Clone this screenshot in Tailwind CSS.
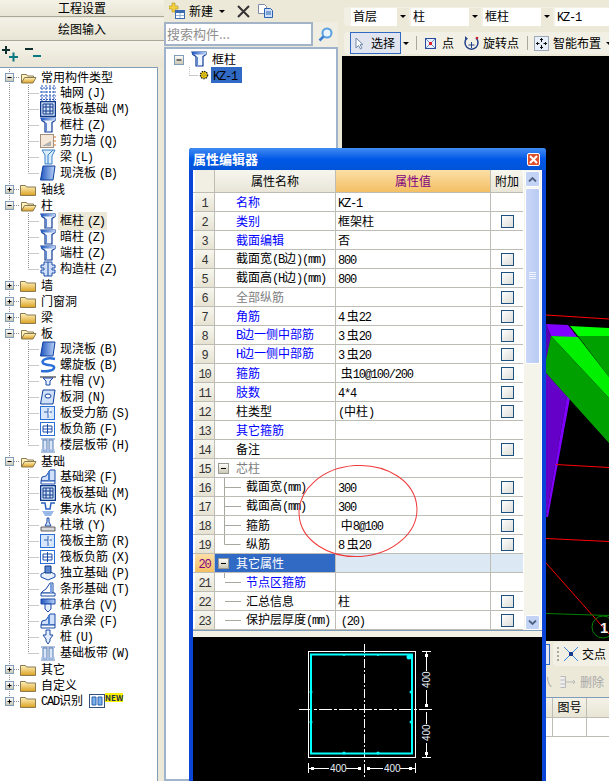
<!DOCTYPE html>
<html lang="zh-CN">

<head>
  <meta charset="UTF-8" />
  <title>属性编辑器</title>
  <script src="https://cdn.jsdelivr.net/npm/@tailwindcss/browser@4"></script>
</head>

<body class="relative flex w-[609px] h-[781px] overflow-hidden bg-[#ece9d8] text-xs leading-4 text-black font-['Noto_Sans_CJK_SC',sans-serif]">
  <svg class="absolute w-0 h-0">
    <defs>
      <linearGradient id="fold" x1="0" y1="0" x2="0" y2="1">
        <stop offset="0" stop-color="#fff3c0" />
        <stop offset="1" stop-color="#dca020" />
      </linearGradient>
      <linearGradient id="box" x1="0" y1="0" x2="0" y2="1">
        <stop offset="0" stop-color="#ffffff" />
        <stop offset="1" stop-color="#c8c4b0" />
      </linearGradient>
      <linearGradient id="blu" x1="0" y1="0" x2="1" y2="0">
        <stop offset="0" stop-color="#1f55c0" />
        <stop offset="1" stop-color="#bcd4f6" />
      </linearGradient>
    </defs>
  </svg>

  <!-- left column -->
  <div class="flex flex-col w-[164px] h-full shrink-0">
    <div class="h-[17px] text-center leading-[16px] bg-linear-to-b from-[#f4f2e6] to-[#e8e5d5] border-b border-[#aca899]">工程设置</div>
    <div class="h-[23px] mt-px text-center leading-[22px] bg-linear-to-b from-[#f4f2e6] to-[#e8e5d5] border-b border-[#aca899]">绘图输入</div>
    <div class="h-[26px] flex items-center pl-[1px] bg-linear-to-b from-[#f5f3ea] to-[#e8e5d5]">
      <svg class="w-[42px] h-[18px]" viewBox="0 0 42 18" fill="none" stroke-width="2">
        <path d="M1 5h8M5 1v8" stroke="#103030" />
        <path d="M8 12h9M12.500 7.500v9" stroke="#0a7a80" />
        <path d="M24 4h8" stroke="#103030" />
        <path d="M32 11h8" stroke="#0a7a80" />
      </svg>
    </div>
    <div id="tree" class="flex-1 w-[158px] pt-px bg-white border-r border-t border-[#7f9db9] overflow-hidden"></div>
  </div>

  <!-- component list -->
  <div class="flex flex-col w-[176px] h-full shrink-0">
    <div class="h-[22px] flex items-center pl-[5px]">
      <svg class="w-[17px] h-[18px]" viewBox="0 0 17 18">
        <path d="M3 1h3v3h3v3H6v3H3V7H0V4h3z" fill="#f4d040" stroke="#b09020" stroke-width=".6" />
        <rect x="6.500" y="8.500" width="9" height="8" fill="#fff" stroke="#3a6ab0" />
        <path d="M6.500 8.500h9v2.500h-9z" fill="#3a6ab0" />
        <path d="M7 13.500h8M11 11v5" stroke="#9ab4d8" />
      </svg>
      <span class="ml-[3px] text-[12px]">新建</span>
      <span class="ml-[6px] w-0 h-0 border-x-[3px] border-t-[3px] border-x-transparent border-t-black"></span>
      <svg class="ml-[12px] w-[13px] h-[13px]" viewBox="0 0 13 13">
        <path d="M1 1l11 11M12 1L1 12" stroke="#333" stroke-width="2" />
      </svg>
      <svg class="ml-[8px] w-[15px] h-[14px]" viewBox="0 0 15 14">
        <path d="M.5.5h6l2 2v7h-8z" fill="#fff" stroke="#7a8aa8" />
        <path d="M6.500 4.500h6l2 2v7h-8z" fill="#cfe0fa" stroke="#2a60b0" />
        <path d="M8 8h5M8 10h5" stroke="#2a60b0" />
      </svg>
    </div>
    <div class="h-[25px] flex">
      <div class="w-[149px] h-[24px] bg-white border-2 border-[#a4b4c8] pl-[1px] text-[13px] leading-[20px] text-[#909090]">搜索构件...</div>
      <div class="w-[25px] flex items-center justify-center bg-[#f0eee2]">
        <svg class="w-[15px] h-[15px]" viewBox="0 0 15 15" fill="none">
          <circle cx="9" cy="6" r="4.500" fill="#eaf4fc" stroke="#58a0e0" stroke-width="2" />
          <path d="M5.500 9.500L1.500 13.500" stroke="#3a80d0" stroke-width="2.500" />
        </svg>
      </div>
    </div>
    <div class="flex-1 w-[174px] bg-white border-2 border-[#9fb4cc] pt-px">
      <div class="flex items-center h-[17px]">
        <svg class="w-[25px] h-[16px] shrink-0" viewBox="0 0 25 16">
          <rect x="8.500" y="4.500" width="9" height="9" fill="url(#box)" stroke="#7f9db9" />
          <path d="M10.500 9h5" stroke="#000" />
        </svg>
        <span id="rootIcon"></span>
        <span class="ml-[5px]">框柱</span>
      </div>
      <div class="flex items-center h-[16px] pl-[23px]">
        <svg class="w-[21px] h-[16px] shrink-0" viewBox="0 0 21 16">
          <path d="M0 0v8.500h9" stroke="#909090" stroke-dasharray="1 1" fill="none" />
          <circle cx="15" cy="8" r="3.500" fill="#ffe000" stroke="#202020" stroke-width="1.500" stroke-dasharray="1.500 .8" />
          <circle cx="15" cy="8" r="1.300" fill="#ffff60" stroke="#704000" stroke-width=".6" />
        </svg>
        <span class="ml-[1px] pl-[2px] w-[31px] h-[16px] bg-[#316ac5] text-black"><span class="font-['Liberation_Mono'] text-[12px] tracking-[-1.2px]">KZ-1</span></span>
      </div>
    </div>
  </div>

  <!-- drawing side -->
  <div class="flex flex-col flex-1 min-w-0 h-full">
    <div class="h-[7px]"></div>
    <div class="h-[19px] flex items-center ml-[4px] pl-[7px] gap-[2px] bg-[#f2f0e4] rounded-l-sm">
      <div class="flex w-[58px] h-[18px] bg-white">
        <span class="flex-1 pl-[2px]">首层</span>
        <span class="w-[12px] flex items-center justify-center bg-[#ece9d8]"><span class="w-0 h-0 border-x-[3px] border-t-[3px] border-x-transparent border-t-black"></span></span>
      </div>
      <div class="flex w-[70px] h-[18px] bg-white">
        <span class="flex-1 pl-[2px]">柱</span>
        <span class="w-[12px] flex items-center justify-center bg-[#ece9d8]"><span class="w-0 h-0 border-x-[3px] border-t-[3px] border-x-transparent border-t-black"></span></span>
      </div>
      <div class="flex w-[70px] h-[18px] bg-white">
        <span class="flex-1 pl-[2px]">框柱</span>
        <span class="w-[12px] flex items-center justify-center bg-[#ece9d8]"><span class="w-0 h-0 border-x-[3px] border-t-[3px] border-x-transparent border-t-black"></span></span>
      </div>
      <div class="flex-1 h-[18px] bg-white pl-[2px]"><span class="font-['Liberation_Mono'] text-[12px] tracking-[-1.2px]">KZ-1</span></div>
    </div>
    <div class="h-[6px]"></div>
    <div class="h-[22px] flex items-center ml-[4px] pl-[6px] bg-[#f2f0e4] rounded-l-sm overflow-hidden whitespace-nowrap">
      <div class="w-[51px] h-[22px] shrink-0 flex items-center border border-[#316ac5] bg-[#e0e5f0] pl-[4px]">
        <svg class="w-[10px] h-[13px]" viewBox="0 0 10 13">
          <path d="M1 1v10l2.500-2.500 2 3.500 1.500-1-2-3.300H8z" fill="#fff" stroke="#7088a8" />
        </svg>
        <span class="ml-[6px]">选择</span>
      </div>
      <span class="ml-[2px] shrink-0 w-0 h-0 border-x-[3px] border-t-[3px] border-x-transparent border-t-black"></span>
      <span class="ml-[7px] shrink-0 w-px h-[14px] bg-[#aca899]"></span>
      <svg class="ml-[8px] shrink-0 w-[11px] h-[11px]" viewBox="0 0 11 11">
        <rect x=".5" y=".5" width="10" height="10" fill="#e8f0fc" stroke="#2a4aa0" />
        <path d="M1 1l9 9M10 1l-9 9" stroke="#7090c8" />
        <rect x="4" y="4" width="3" height="3" fill="#e02030" />
      </svg>
      <span class="ml-[6px] shrink-0">点</span>
      <svg class="ml-[10px] shrink-0 w-[15px] h-[16px]" viewBox="0 0 15 16" fill="none">
        <path d="M3 3a6.500 6.500 0 1 0 9 0" stroke="#24428a" stroke-width="1.500" />
        <path d="M7.500 7v6M4.500 10h6" stroke="#24428a" />
        <circle cx="13" cy="3" r="1.300" fill="#d02030" />
        <path d="M1 1l3 3-3 1z" fill="#24428a" />
      </svg>
      <span class="ml-[4px] shrink-0">旋转点</span>
      <span class="ml-[8px] shrink-0 w-px h-[14px] bg-[#aca899]"></span>
      <svg class="ml-[6px] shrink-0 w-[15px] h-[15px]" viewBox="0 0 15 15" fill="none">
        <rect x=".5" y=".5" width="14" height="14" fill="#e8f0fc" stroke="#506080" stroke-dasharray="1 1" />
        <path d="M7.500 2v4M6 3.500h3M7.500 9v4M6 11.500h3M2 7.500h3.500M9.500 7.500H13M3.500 6v3M11.500 6v3" stroke="#101010" />
      </svg>
      <span class="ml-[4px] shrink-0">智能布置</span>
      <span class="ml-[5px] shrink-0 w-0 h-0 border-x-[3px] border-t-[3px] border-x-transparent border-t-black"></span>
    </div>
    <div class="h-[2px]"></div>

    <svg class="ml-[2px] w-[267px] h-[585px] bg-black shrink-0" viewBox="342 56 267 585">
      <path d="M546 324L568 325L578 338L551 336z" fill="#8000ff" />
      <path d="M546 324L551 336L546 372z" fill="#5a00b4" />
      <path d="M546 373L567 396L546 517z" fill="#6400c8" />
      <path d="M567 396L570 398L548 517H546z" fill="#8000ff" />
      <path d="M570 326L609 328V336H578z" fill="#00ff00" />
      <path d="M578 336H609V377z" fill="#00a000" />
      <path d="M551 336L578 337L609 377V398z" fill="#00f000" />
      <path d="M551 336L609 398V443L546 373V360z" fill="#00a000" />
      <path d="M546 315L609 319" stroke="#ff0000" fill="none" />
      <path d="M556 464.500L609 467.500M546 538.500L609 541.500M546 563L609 634" stroke="#ff0000" fill="none" />
      <path d="M546 613.500L609 615.500" stroke="#008000" fill="none" />
      <circle cx="603" cy="627" r="11" stroke="#008000" fill="none" />
      <text x="600" y="633" font-family="Liberation Sans" font-size="15" font-weight="700" fill="#f0f0f0">1</text>
    </svg>

    <div class="h-[26px] flex items-center pl-[206px] overflow-hidden">
      <div class="w-[4px] h-[21px] shrink-0 bg-[#e0e5f0] border-y border-r border-[#316ac5]"></div>
      <div class="ml-[3px] w-[63px] h-[24px] shrink-0 flex items-center pl-[4px] bg-[#f2f0e4] rounded-l-sm">
        <span class="w-[2px] h-[14px] shrink-0 border-l-2 border-dotted border-[#aca899]"></span>
        <svg class="ml-[5px] w-[14px] h-[14px] shrink-0" viewBox="0 0 14 14">
          <path d="M0 0l14 14M14 0L0 14" stroke="#3a8ae0" />
          <rect x="5" y="5" width="4" height="4" fill="#1a3a90" />
        </svg>
        <span class="ml-[4px] whitespace-nowrap">交点</span>
      </div>
    </div>
    <div class="h-[30px] flex items-center pl-[206px] overflow-hidden text-[#a8a8a8]">
      <span class="w-[6px] shrink-0 overflow-hidden"><span class="block w-[12px] -ml-[6px]">八</span></span>
      <svg class="ml-[8px] w-[16px] h-[12px] shrink-0" viewBox="0 0 16 12">
        <path d="M.5.5h5v11h-5M.5 4h5M.5 8h5" fill="#eee" stroke="#b8b8b8" />
        <path d="M6 6h9M13 4l2 2-2 2" stroke="#b8b8b8" fill="none" />
      </svg>
      <span class="ml-[4px] whitespace-nowrap">删除</span>
    </div>
    <div class="flex-1 bg-white border-t border-[#7f9db9] pl-[206px] overflow-hidden">
      <div class="flex h-[20px] bg-linear-to-b from-[#f4f2e8] to-[#e8e5d5] border-b border-[#bdbdb5]">
        <span class="w-[7px] shrink-0 border-r border-[#bdbdb5]"></span>
        <span class="w-[34px] shrink-0 text-center border-r border-[#bdbdb5] leading-[18px]">图号</span>
      </div>
      <div class="flex h-[19px] border-b border-[#bdbdb5]">
        <span class="w-[7px] shrink-0 border-r border-[#bdbdb5]"></span>
        <span class="w-[34px] shrink-0 border-r border-[#bdbdb5]"></span>
      </div>
    </div>
  </div>

  <!-- floating property window -->
  <div class="absolute left-[189px] top-[148px] w-[357px] h-[633px] flex flex-col bg-[#0a45d8] rounded-t-[3px]">
    <div class="h-[22px] shrink-0 flex items-center justify-between pl-[4px] pr-[6px] bg-linear-to-b from-[#3f8cf3] via-[#0058e6] to-[#0054d8] rounded-t-[3px]">
      <span class="text-white font-bold text-[13px]">属性编辑器</span>
      <span class="w-[13px] h-[13px] flex items-center justify-center bg-[#e0502c] border border-white rounded-[2px]">
        <svg class="w-[9px] h-[9px]" viewBox="0 0 9 9"><path d="M1 1l7 7M8 1L1 8" stroke="#fff" stroke-width="2" /></svg>
      </span>
    </div>
    <div class="flex-1 flex flex-col mx-[4px] mb-0 min-h-0 bg-[#f3f1e6] relative">
      <div class="flex h-[461px] shrink-0 bg-white border-b border-[#7f9db9]">
        <div class="w-[330px] shrink-0">
          <div class="flex h-[23px] pl-[2px] border-b border-[#bdbdb5]">
            <span class="w-[20px] bg-[#f1efe3] border-r border-[#bdbdb5]"></span>
            <span class="w-[121px] text-center leading-[22px] bg-linear-to-b from-[#f7f6ee] to-[#e9e6d8] border-r border-[#bdbdb5]">属性名称</span>
            <span class="w-[155px] text-center leading-[22px] text-[#800080] bg-linear-to-b from-[#fbdfa6] to-[#f4bf63] border-r border-[#bdbdb5]">属性值</span>
            <span class="w-[32px] text-center leading-[22px] bg-linear-to-b from-[#f7f6ee] to-[#e9e6d8]">附加</span>
          </div>
          <div id="rows"></div>
        </div>
        <div class="w-[17px] ml-px flex flex-col shrink-0 bg-[#f5f4ea] px-px pt-[1px]">
          <div class="h-[16px] flex items-center justify-center rounded-[2px] bg-[#c3d3f6] border border-white">
            <svg class="w-[9px] h-[5px]" viewBox="0 0 9 5"><path d="M1 4.500l3.500-3.500L8 4.500" stroke="#4d6185" stroke-width="1.800" fill="none" /></svg>
          </div>
          <div class="h-[176px] mt-px flex items-center justify-center rounded-[2px] bg-linear-to-r from-[#c9d7f8] to-[#b9cbf3] border border-white">
            <svg class="w-[7px] h-[8px]" viewBox="0 0 7 8"><path d="M0 .5h7M0 2.500h7M0 4.500h7M0 6.500h7" stroke="#eef3ff" /></svg>
          </div>
          <div class="flex-1"></div>
          <div class="h-[15px] flex items-center justify-center rounded-[2px] bg-[#c3d3f6] border border-white">
            <svg class="w-[9px] h-[5px]" viewBox="0 0 9 5"><path d="M1 .5L4.500 4 8 .5" stroke="#4d6185" stroke-width="1.800" fill="none" /></svg>
          </div>
        </div>
      </div>
      <div class="h-[6px] shrink-0"></div>
      <svg class="flex-1 w-full bg-black min-h-0" viewBox="193 637 349 144" font-family="Liberation Sans" font-size="10">
        <g fill="none" stroke="#fff">
          <rect x="308.500" y="651.500" width="107" height="106" />
          <path d="M364.500 644V777" stroke-dasharray="9 2 2 2" />
          <path d="M299 709.500H434" stroke-dasharray="13 2 3 2" />
          <path d="M426.500 651V671M426.500 690V705M426.500 712V724M426.500 743V757M422 651.500h9M422 757.500h9" />
          <path d="M308.500 763v10M415.500 763v10M309 768.500h20M346 768.500h12M367 768.500h16M400 768.500h15" />
        </g>
        <g fill="#fff">
          <rect x="425" y="654" width="3" height="3" /><rect x="425" y="704" width="3" height="3" /><rect x="425" y="752" width="3" height="3" />
          <rect x="311" y="767" width="3" height="3" /><rect x="358" y="767" width="3" height="3" /><rect x="367" y="767" width="3" height="3" /><rect x="409" y="767" width="3" height="3" />
        </g>
        <rect x="311" y="654.500" width="101" height="99" fill="none" stroke="#00ffff" stroke-width="2" />
        <g fill="#00ffff">
          <circle cx="409" cy="657" r="2.500" /><circle cx="344" cy="655" r="1" /><circle cx="378" cy="655" r="1" />
          <circle cx="311" cy="692" r="1.500" /><circle cx="311" cy="722" r="1.500" /><circle cx="411" cy="692" r="1.500" /><circle cx="411" cy="722" r="1.500" />
          <circle cx="344" cy="753" r="1.500" /><circle cx="378" cy="753" r="1.500" />
        </g>
        <g fill="#e8eef8">
          <text x="330" y="772">400</text>
          <text x="384" y="772">400</text>
          <text transform="translate(430 688) rotate(-90)">400</text>
          <text transform="translate(430 741) rotate(-90)">400</text>
        </g>
      </svg>
      <svg class="absolute left-[104px] top-[293px] w-[122px] h-[96px]" viewBox="0 0 122 96" fill="none">
        <ellipse cx="61" cy="48" rx="59" ry="45.500" transform="rotate(-4 61 48)" stroke="#f03a3a" />
      </svg>
    </div>
  </div>

  <script>
    // small component icons, 16x16
    const icons = {
      col: '<path d="M1 1h14v2.500l-3 2V15H5V5.500l-3-2z" fill="#f0f5fd" stroke="#0f3a96" stroke-width="1.200"/><path d="M1 1h14v2.500H1z" fill="url(#blu)"/><path d="M6.500 6v8" stroke="#5a88d8"/>',
      grid: '<path d="M2 0v16M6 0v16M10 0v16M14 0v16M0 3h16M0 7h16M0 11h16M0 14.500h16" stroke="#2a5ab8" stroke-dasharray="2 1" fill="none"/>',
      raft: '<rect x=".5" y=".5" width="15" height="15" fill="#cfe0f8" stroke="#103a88" stroke-width="1.500"/><path d="M3 3h10v10H3zM6 3v10M10 3v10M3 6h10M3 10h10" stroke="#103a88" fill="none"/>',
      wall: '<rect x=".5" y="1.500" width="13" height="13" fill="#f6e8d8" stroke="#a09080"/><path d="M2 13l9-5v5z" fill="#b0b0b0"/><path d="M15 3v11" stroke="#d87020" stroke-dasharray="2 2"/>',
      beam: '<path d="M2 1h13l-3 6v8H5V6z" fill="#d8ecfa" stroke="#3a80c8"/><path d="M8 6l5-5M8 6v9" stroke="#3a80c8"/>',
      slab: '<path d="M3 1h12l-2 14H.5z" fill="url(#blu)" stroke="#0f3f9c"/>',
      gz: '<path d="M4 1h8v3h3v3h-3v2h3v3h-3v3H4v-3H1V9h3V7H1V4h3z" fill="#cfe0f8" stroke="#1a4aa8"/><path d="M8 1v14" stroke="#1a4aa8"/>',
      spiral: '<path d="M15 2C7 0 1 3 3 6s10 1 11 4-6 5-13 4" fill="none" stroke="#2a70d8" stroke-width="2.500"/>',
      cap: '<path d="M0 3h16v2H0z" fill="#8a8a8a"/><path d="M3 5h10l-3 3v4H6V8z" fill="#e4eefc" stroke="#1a4aa8"/>',
      hole: '<path d="M3 1h12l-2 14H.5z" fill="#cfe0f8" stroke="#0f3f9c"/><ellipse cx="8" cy="7" rx="3" ry="2" fill="#fff" stroke="#0f3f9c"/>',
      sbar: '<rect x=".5" y="1.500" width="14" height="13" fill="#d8e6fa" stroke="#2a70d8"/><path d="M8 3v10M4 7h8" stroke="#2a60b0"/><path d="M11 4a4 4 0 0 0 0 7" stroke="#fff" fill="none"/>',
      nbar: '<rect x=".5" y="1.500" width="14" height="13" fill="#fff" stroke="#2a70d8"/><path d="M3 5h9v6H3zM7.500 3v10M3 8h9" stroke="#1a4aa8" fill="none"/>',
      band: '<path d="M1 2h14M1 15h14" stroke="#5a80c0"/><path d="M3 3h4v11H3zM9 3h4v11H9z" fill="#d8e6fa" stroke="#5a7ab0"/><path d="M1 12h14v3H1z" fill="#a8c0e8" fill-opacity=".6"/>',
      fbeam: '<path d="M6 7l4-6h5v11H1l1-4z" fill="#cfe0f8" stroke="#1a4aa8"/><path d="M1 12h14v3H1z" fill="#fff" stroke="#1a4aa8"/><path d="M9 2v10" stroke="#4a80d0" stroke-width="2"/>',
      pit: '<path d="M1 2h4l1 6h4l1-6h4" fill="none" stroke="#2a60c0" stroke-width="1.500"/><path d="M2 10h12l-3 5H5z" fill="#9ab8e8"/>',
      pier: '<path d="M7 1h2v4l2 4H5l2-4z" fill="#cfe0f8" stroke="#1a4aa8"/><path d="M1 10h14v4H1z" fill="#d8d8d8" stroke="#606060"/>',
      iso: '<path d="M1 9l7-3 7 3v3l-7 3-7-3z" fill="#e8f0fc" stroke="#1a4aa8"/><path d="M5 1h6v7H5z" fill="#5a88d0" stroke="#123a88"/>',
      strip: '<path d="M6 8l4-6h3v10H1l2-2z" fill="#fff" stroke="#1a4aa8"/><path d="M1 12h14v3H1z" fill="#fff" stroke="#1a4aa8"/><path d="M11 3v9" stroke="#7aa0e0" stroke-width="2"/>',
      ptcap: '<path d="M1 2h14v5H1z" fill="url(#blu)" stroke="#1a4aa8"/><path d="M5 7h6v5l-3 3-3-3z" fill="#e4eefc" stroke="#1a4aa8"/>',
      pile: '<path d="M6 1h4v5h3l-3 4v2l-2 3-2-3v-2L3 6h3z" fill="#e4eefc" stroke="#1a4aa8"/>'
    };
    const icon = (n) => `<svg class="w-4 h-4 shrink-0" viewBox="0 0 16 16">${icons[n]}</svg>`;

    // half width text in the screenshot's font is 6px per char
    const txt = (s) => s.replace(/[\x21-\x7e]+/g, (m) => `<span class="font-['Liberation_Mono'] text-[12px] tracking-[-1.2px]">${m}</span>`);

    const foldOpen = '<path d="M21.500 5.500h5l1 1.500h6v2H25l-3.500 5z" fill="#fff3c0" stroke="#8a7a50"/><path d="M21.500 14l3-5.500H36l-3 5.500z" fill="url(#fold)" stroke="#8a7a50"/>';
    const foldShut = '<path d="M20.500 4.500h5l1 1.500h9v8.500h-15z" fill="url(#fold)" stroke="#8a7a50"/>';

    function groupRow(label, open, last) {
      const v = last ? 'M9.500 0v8' : 'M9.500 0v16';
      return `<div class="flex items-center h-4"><svg class="w-10 h-4 shrink-0" viewBox="0 0 40 16">
        <path d="${v}M14 8.500h6" stroke="#909090" stroke-dasharray="1 1" fill="none"/>
        <rect x="5.500" y="4.500" width="8" height="8" fill="url(#box)" stroke="#7f9db9"/>
        <path d="${open ? 'M7.500 8.500h4' : 'M7.500 8.500h4M9.500 6.500v4'}" stroke="#000"/>
        ${open ? foldOpen : foldShut}</svg><span class="ml-px whitespace-nowrap">${txt(label)}</span>${last ? '<svg class="ml-[6px] w-[16px] h-[14px] shrink-0" viewBox="0 0 16 14"><rect x=".5" y=".5" width="15" height="13" fill="#fff" stroke="#35507a"/><path d="M3 3h4v8H3zM9 3h4v8H9z" fill="#7ab0ea" stroke="#2a60b0"/></svg><span class="-mt-[8px] h-[9px] bg-[#fff200] text-[8px] leading-[9px] font-bold text-[#20304a] font-[\'Liberation_Sans\']">NEW</span>' : ''}</div>`;
    }

    function childRow(ic, label, end, on) {
      return `<div class="flex items-center h-4"><svg class="w-10 h-4 shrink-0" viewBox="0 0 40 16">
        <path d="M9.500 0v16M28.500 0v${end ? 8 : 16}M28.500 8.500H39" stroke="#909090" stroke-dasharray="1 1" fill="none"/></svg>
        ${icon(ic)}<span class="ml-[2px] px-[2px] whitespace-nowrap ${on ? 'bg-[#ece9d8]' : ''}">${txt(label)}</span></div>`;
    }

    const tree = [
      ['常用构件类型', 1, [['grid', '轴网 (J)'], ['raft', '筏板基础 (M)'], ['col', '框柱 (Z)'], ['wall', '剪力墙 (Q)'], ['beam', '梁 (L)'], ['slab', '现浇板 (B)']]],
      ['轴线', 0],
      ['柱', 1, [['col', '框柱 (Z)', 1], ['col', '暗柱 (Z)'], ['col', '端柱 (Z)'], ['gz', '构造柱 (Z)']]],
      ['墙', 0], ['门窗洞', 0], ['梁', 0],
      ['板', 1, [['slab', '现浇板 (B)'], ['spiral', '螺旋板 (B)'], ['cap', '柱帽 (V)'], ['hole', '板洞 (N)'], ['sbar', '板受力筋 (S)'], ['nbar', '板负筋 (F)'], ['band', '楼层板带 (H)']]],
      ['基础', 1, [['fbeam', '基础梁 (F)'], ['raft', '筏板基础 (M)'], ['pit', '集水坑 (K)'], ['pier', '柱墩 (Y)'], ['sbar', '筏板主筋 (R)'], ['nbar', '筏板负筋 (X)'], ['iso', '独立基础 (P)'], ['strip', '条形基础 (T)'], ['ptcap', '桩承台 (V)'], ['fbeam', '承台梁 (F)'], ['pile', '桩 (U)'], ['band', '基础板带 (W)']]],
      ['其它', 0], ['自定义', 0], ['CAD识别', 0]
    ];
    let treeHtml = '';
    tree.forEach((g, i) => {
      treeHtml += groupRow(g[0], g[1], i === tree.length - 1);
      (g[2] || []).forEach((c, j) => { treeHtml += childRow(c[0], c[1], j === g[2].length - 1, c[2]); });
    });
    document.getElementById('tree').innerHTML = treeHtml;
    document.getElementById('rootIcon').innerHTML = icon('col');

    // [name, value, colour, has checkbox, tree part]
    const rows = [
      ['名称', 'KZ-1', 'b', 0], ['类别', '框架柱', 'b', 1], ['截面编辑', '否', 'b', 0],
      ['截面宽(B边)(mm)', '800', 'k', 1], ['截面高(H边)(mm)', '800', 'k', 1], ['全部纵筋', '', 'g', 1],
      ['角筋', '4 虫22', 'b', 1], ['B边一侧中部筋', '3 虫20', 'b', 1], ['H边一侧中部筋', '3 虫20', 'b', 1],
      ['箍筋', ' 虫10@100/200', 'b', 1], ['肢数', '4*4', 'b', 1], ['柱类型', '(中柱)', 'k', 1],
      ['其它箍筋', '', 'b', 0], ['备注', '', 'k', 1], ['芯柱', '', 'g', 0, 'box'],
      ['截面宽(mm)', '300', 'k', 1, 'mid'], ['截面高(mm)', '300', 'k', 1, 'mid'], ['箍筋', ' 中8@100', 'k', 1, 'mid'],
      ['纵筋', '8 虫20', 'k', 1, 'end'], ['其它属性', '', 'w', 0, 'box'], ['节点区箍筋', '', 'b', 0, 'top'],
      ['汇总信息', '柱', 'k', 1, 'h'], ['保护层厚度(mm)', ' (20)', 'k', 1, 'h']
    ];
    const colour = { b: 'text-[#0000ff]', k: 'text-black', g: 'text-[#808080]', w: 'text-white' };
    const branch = {
      mid: 'M9.500 0v19M10 9.500h16',
      end: 'M9.500 0v9.500h16',
      top: 'M9.500 0v5M10 9.500h16',
      h: 'M10 9.500h16'
    };
    const check = '<span class="w-[13px] h-[13px] border border-[#1c5180] bg-linear-to-br from-white to-[#dcdcd7]"></span>';

    document.getElementById('rows').innerHTML = rows.map((r, i) => {
      const sel = i === 19;
      let lead = '<span class="w-[21px] shrink-0"></span>';
      if (r[4] === 'box') {
        lead = `<svg class="w-[21px] h-[19px] shrink-0" viewBox="0 0 21 19"><rect x="3.500" y="4.500" width="10" height="10" fill="url(#box)" stroke="#9a9a90"/><path d="M6 9.500h5" stroke="#000"/></svg>`;
      } else if (r[4]) {
        lead = `<svg class="w-[31px] h-[19px] shrink-0" viewBox="0 0 31 19"><path d="${branch[r[4]]}" stroke="#a8a8a0" fill="none"/></svg>`;
      }
      return `<div class="flex h-[19px] pl-[2px] border-b border-[#bdbdb5]">
        <span class="w-[20px] shrink-0 text-center leading-[18px] border-r border-[#bdbdb5] ${sel ? 'bg-linear-to-b from-[#fbdfa6] to-[#f4bf63] text-[#800080]' : 'bg-linear-to-b from-[#f7f6ee] to-[#e6e3d3] text-[#333]'}">${txt(String(i + 1))}</span>
        <span class="w-[121px] shrink-0 flex items-center whitespace-nowrap overflow-hidden border-r border-[#bdbdb5] ${sel ? 'bg-[#316ac5]' : ''} ${colour[r[2]]}">${lead}<span>${txt(r[0])}</span></span>
        <span class="w-[155px] shrink-0 pl-[2px] leading-[18px] whitespace-pre border-r border-[#bdbdb5] ${sel ? 'bg-[#dde8f5]' : ''}">${txt(r[1])}</span>
        <span class="w-[32px] shrink-0 flex items-center justify-center ${sel ? 'bg-[#dde8f5]' : ''}">${r[3] ? check : ''}</span>
      </div>`;
    }).join('');
  </script>
</body>

</html>
